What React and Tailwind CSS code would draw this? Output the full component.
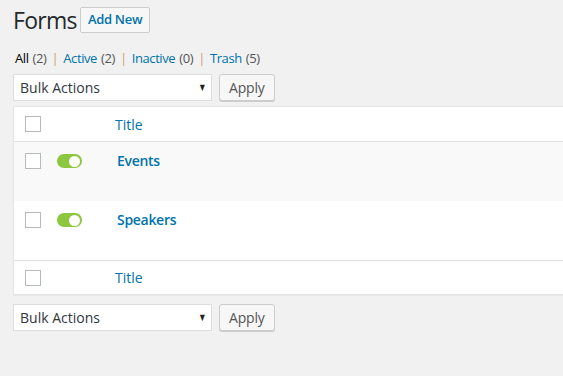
import React from "react";

const Checkbox = () => (
  <span className="block w-4 h-4 bg-white border border-[#b4b9be]" />
);

const Toggle = () => (
  <span className="flex items-center w-[25px] h-[14px] rounded-full bg-[#8dc63f] px-[2px] justify-end">
    <span className="block w-[11px] h-[11px] rounded-full bg-white" />
  </span>
);

const BulkBar = () => (
  <div className="flex items-center gap-[6px]">
    <div className="relative flex items-center w-[199px] h-[27px] bg-white border border-[#ddd] pl-[6px] text-[14px] text-[#32373c]">
      Bulk Actions
      <span className="absolute right-[3px] top-[6px] text-[11px] leading-[12px] text-[#222] scale-x-75">▼</span>
    </div>
    <button className="h-[27px] px-[9px] ml-px bg-[#f7f7f7] border border-[#ccc] rounded-[3px] text-[14px] tracking-[-0.2px] text-[#555] shadow-[0_1px_0_#ccc]">
      Apply
    </button>
  </div>
);

const rows = [
  { name: "Events", bg: "bg-[#f9f9f9]" },
  { name: "Speakers", bg: "bg-white" },
];

export default function App() {
  return (
    <div
      className="w-[563px] h-[376px] overflow-hidden bg-[#f1f1f1] pl-[13px] text-[#444]"
      style={{ fontFamily: '"Open Sans", "Liberation Sans", sans-serif' }}
    >
      {/* Heading */}
      <div className="flex items-center gap-[3px] pt-[7px]">
        <h1 className="text-[23px] leading-[26px] tracking-[-0.7px] text-[#23282d] font-normal">Forms</h1>
        <button className="h-[26px] px-[7px] bg-[#f7f7f7] border border-[#ccc] rounded-[2px] text-[13px] font-semibold tracking-[-0.3px] text-[#0073aa]">
          Add New
        </button>
      </div>

      {/* Status links */}
      <div className="flex items-center mt-[18px] h-[16px] text-[13px] tracking-[-0.4px] text-[#555] pl-[2px]">
        <span className="text-[#000]">All</span>
        <span className="ml-[4px]">(2)</span>
        <span className="mx-[5px] text-[#c99d6d]">|</span>
        <span className="text-[#0073aa]">Active</span>
        <span className="ml-[4px] text-[#555]">(2)</span>
        <span className="mx-[5px] text-[#c99d6d]">|</span>
        <span className="text-[#0073aa]">Inactive</span>
        <span className="ml-[4px] text-[#555]">(0)</span>
        <span className="mx-[5px] text-[#c99d6d]">|</span>
        <span className="text-[#0073aa]">Trash</span>
        <span className="ml-[4px] text-[#555]">(5)</span>
      </div>

      <div className="mt-[7px]">
        <BulkBar />
      </div>

      {/* Table */}
      <div className="mt-[5px] w-[620px] bg-white border border-[#e5e5e5] shadow-[0_1px_1px_rgba(0,0,0,0.04)]">
        <div className="flex items-center h-[35px] border-b border-[#e1e1e1]">
          <div className="pl-[11px]">
            <Checkbox />
          </div>
          <span className="ml-[74px] text-[14px] text-[#0073aa]">Title</span>
        </div>
        {rows.map((r) => (
          <div key={r.name} className={`flex items-start h-[59px] pt-[11px] ${r.bg}`}>
            <div className="pl-[11px]">
              <Checkbox />
            </div>
            <div className="ml-[16px] mt-px">
              <Toggle />
            </div>
            <span className="ml-[35px] -mt-[3px] text-[14px] font-semibold tracking-[-0.3px] text-[#0073aa]">{r.name}</span>
          </div>
        ))}
        <div className="flex items-center h-[34px] border-t border-[#e1e1e1]">
          <div className="pl-[11px]">
            <Checkbox />
          </div>
          <span className="ml-[74px] text-[14px] text-[#0073aa]">Title</span>
        </div>
      </div>

      <div className="mt-[9px]">
        <BulkBar />
      </div>
    </div>
  );
}
